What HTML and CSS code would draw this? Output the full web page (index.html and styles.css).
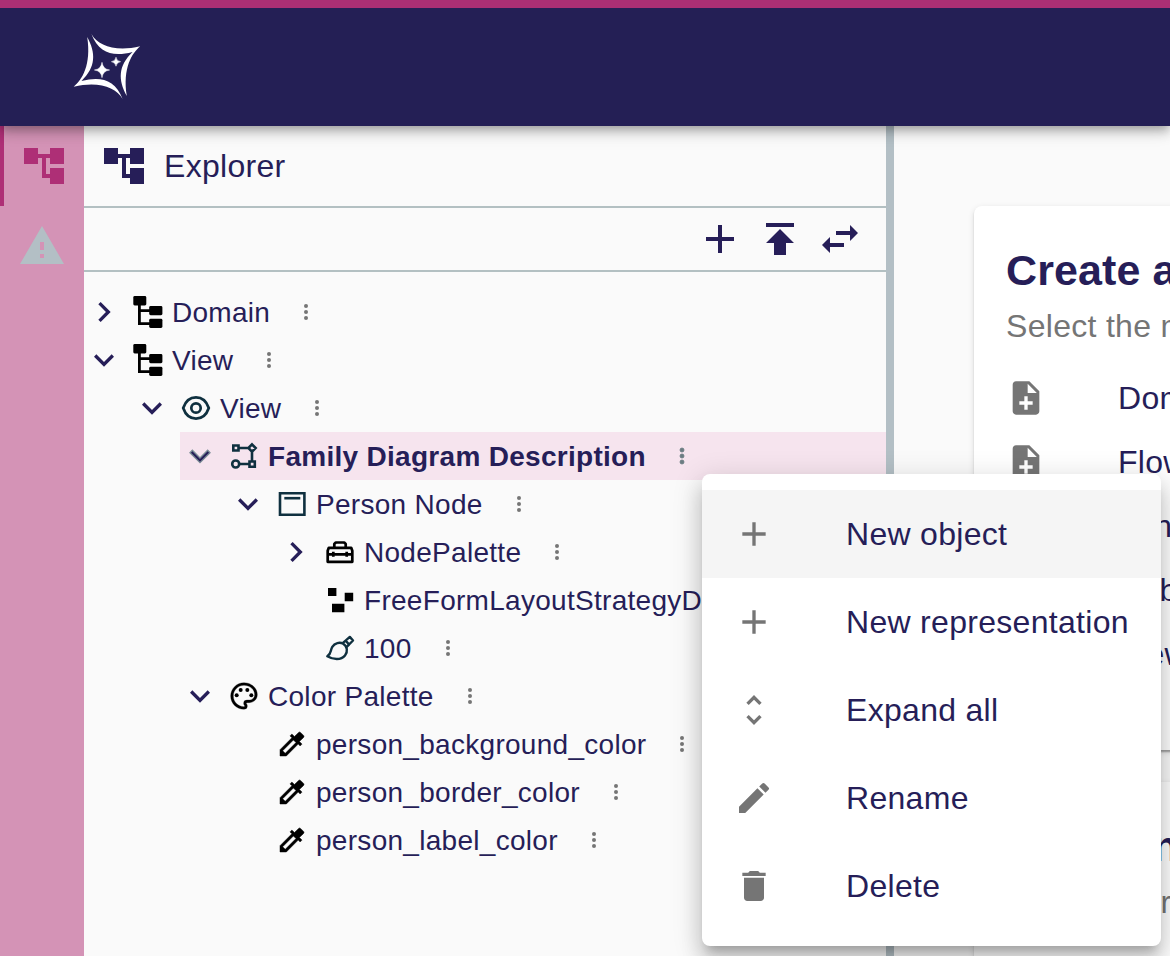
FILE: index.html
```
<!DOCTYPE html>
<html lang="en">
<head>
<meta charset="utf-8">
<title>Explorer</title>
<link rel="stylesheet" href="styles.css">
</head>
<body>
<svg class="defs" aria-hidden="true">
  <symbol id="tree" viewBox="0 0 24 24"><path d="M22 11V3h-7v3H9V3H2v8h7V8h2v10h4v3h7v-8h-7v3h-2V8h2v3z"/></symbol>
  <symbol id="warning" viewBox="0 0 24 24"><path d="M1 21h22L12 2 1 21zm12-3h-2v-2h2v2zm0-4h-2v-4h2v4z"/></symbol>
  <symbol id="add" viewBox="0 0 24 24"><path d="M19 13h-6v6h-2v-6H5v-2h6V5h2v6h6v2z"/></symbol>
  <symbol id="publish" viewBox="0 0 24 24"><path d="M5 4v2h14V4H5zm0 10h4v6h6v-6h4l-7-7-7 7z"/></symbol>
  <symbol id="swap" viewBox="0 0 24 24"><path d="M6.99 11 3 15l3.99 4v-3H14v-2H6.99v-3zM21 9l-3.99-4v3H10v2h7.01v3L21 9z"/></symbol>
  <symbol id="down" viewBox="0 0 24 24"><path d="M16.59 8.59 12 13.17 7.41 8.59 6 10l6 6 6-6z"/></symbol>
  <symbol id="right" viewBox="0 0 24 24"><path d="M10 6 8.59 7.41 13.17 12l-4.58 4.59L10 18l6-6z"/></symbol>
  <symbol id="more" viewBox="0 0 24 24"><circle cx="12" cy="6" r="2"/><circle cx="12" cy="12" r="2"/><circle cx="12" cy="18" r="2"/></symbol>
  <symbol id="unfold" viewBox="0 0 24 24"><path d="M12 5.83 15.17 9l1.41-1.41L12 3 7.41 7.59 8.83 9 12 5.83zm0 12.34L8.83 15l-1.41 1.41L12 21l4.59-4.59L15.17 15 12 18.17z"/></symbol>
  <symbol id="edit" viewBox="0 0 24 24"><path d="M3 17.25V21h3.75L17.81 9.94l-3.75-3.75L3 17.25zM20.71 7.04a.996.996 0 0 0 0-1.41l-2.34-2.34a.996.996 0 0 0-1.41 0l-1.83 1.83 3.75 3.75 1.83-1.83z"/></symbol>
  <symbol id="delete" viewBox="0 0 24 24"><path d="M6 19c0 1.1.9 2 2 2h8c1.1 0 2-.9 2-2V7H6v12zM19 4h-3.5l-1-1h-5l-1 1H5v2h14V4z"/></symbol>
  <symbol id="note" viewBox="0 0 24 24"><path d="M14 2H6c-1.1 0-1.99.9-1.99 2L4 20c0 1.1.89 2 1.99 2H18c1.1 0 2-.9 2-2V8l-6-6zm2 14h-3v3h-2v-3H8v-2h3v-3h2v3h3v2zm-3-7V3.5L18.5 9H13z"/></symbol>
  <symbol id="domain" viewBox="0 0 32 32"><rect x="1.3" y="0" width="13" height="9.4" rx="1.4"/><rect x="17.2" y="10" width="13.2" height="9.2" rx="1.4"/><rect x="17.2" y="22.8" width="13.2" height="9.2" rx="1.4"/><path d="M6 9h2.800v4.200H18v2.800H8.800v10.200H18V29H6z"/></symbol>
  <symbol id="eye" viewBox="0 0 32 32"><g fill="none" stroke="#0f303f" stroke-width="2.700"><path d="M3.200 16C5.500 9.200 10 5.400 16 5.400S26.500 9.200 28.800 16C26.500 22.800 22 26.600 16 26.600S5.500 22.800 3.200 16z"/><circle cx="16" cy="16" r="4.700"/></g></symbol>
  <symbol id="diagram" viewBox="0 0 32 32"><g fill="none" stroke="#0f303f" stroke-width="2.600"><path d="M5.300 5.500h5.200v5H5.300zM24 4.400 27.600 8 24 11.600 20.400 8zM21.500 21.500h5.300v5.200h-5.300zM11 8h9M24 12v9M11.500 24H21"/><circle cx="7.700" cy="24" r="3.500"/></g></symbol>
  <symbol id="node" viewBox="0 0 32 32"><g fill="none" stroke="#0f303f" stroke-width="2.600"><path d="M4 5.300h24.400v21.400H4z"/><path d="M8.300 10.200h16"/></g></symbol>
  <symbol id="toolbox" viewBox="0 0 32 32"><g fill="none" stroke="#000" stroke-width="2.700" stroke-linejoin="round"><path d="M4.800 11.800h22.400l1.100 3v11H3.700v-11zM10.300 11.500V8l1.500-1.500h8.400L21.700 8v3.500M4 18.400h24M9.300 15.800v5M22.700 15.800v5"/></g></symbol>
  <symbol id="freeform" viewBox="0 0 32 32"><path d="M4 4h8.400v8H4zM20.700 8.700h8.500v8.600h-8.500zM8 19.700h12.400v8.600H8z"/></symbol>
  <symbol id="brush" viewBox="0 0 32 32"><g fill="none" stroke="#0f303f" stroke-width="2.400" stroke-linejoin="round"><path d="M3.300 24.300C7.800 21.500 6 18.500 8.300 14.800c2.400-4 7.500-5 10.900-3.100 4.200 2.500 4.800 8 1.800 11.800-4 5-12 4.200-17.700.8z"/><path d="m18.600 11.200 3-2.600 4.200-3.700 3.200 3.600-3.900 4-3 2.800M21.600 8.600l3.500 3.900"/></g></symbol>
  <symbol id="palette" viewBox="0 0 24 24"><path stroke="#000" stroke-width=".2" d="M12 22C6.490 22 2 17.510 2 12S6.490 2 12 2s10 4.040 10 9c0 3.310-2.690 6-6 6h-1.770c-.28 0-.5.22-.5.5 0 .12.05.23.13.33.41.47.64 1.060.64 1.670A2.500 2.500 0 0 1 12 22zm0-18c-4.410 0-8 3.590-8 8s3.590 8 8 8c.28 0 .5-.22.5-.5a.54.54 0 0 0-.14-.35c-.41-.46-.63-1.050-.63-1.650a2.500 2.500 0 0 1 2.500-2.500H16c2.210 0 4-1.790 4-4 0-3.860-3.590-7-8-7z"/><circle cx="6.500" cy="11.500" r="1.500"/><circle cx="9.500" cy="7.500" r="1.500"/><circle cx="14.500" cy="7.500" r="1.500"/><circle cx="17.500" cy="11.500" r="1.500"/></symbol>
  <symbol id="picker" viewBox="0 0 24 24"><path stroke="#000" stroke-width=".35" d="m20.710 5.630-2.340-2.340a.996.996 0 0 0-1.410 0l-3.120 3.120-1.930-1.910-1.410 1.410 1.420 1.420L3 16.250V21h4.750l8.920-8.920 1.420 1.420 1.410-1.410-1.920-1.920 3.120-3.120c.4-.4.4-1.030.01-1.420zM6.920 19 5 17.080l8.060-8.060 1.920 1.920L6.920 19z"/></symbol>
</svg>

<div class="app">
  <header class="navbar">
    <svg class="logo" viewBox="72 32 70 70">
      <path id="swoosh" d="M91.400 34C98 46 116 52 140.300 46.300 132 53 122.500 68 126.800 96 118 80 118 66 132.500 52 114 57 99 54 91.400 34z"/>
      <use href="#swoosh" transform="rotate(180 107 66.500)"/>
      <path d="M102 62.300q.9 6.800 7.600 7.700-6.700.9-7.600 7.700-.9-6.800-7.600-7.700 6.700-.9 7.600-7.700zM116 57.200q.6 4 4.600 4.500-4 .6-4.600 4.500-.6-3.900-4.600-4.500 4-.5 4.600-4.500z" stroke="#fff" stroke-width=".5"/>
    </svg>
  </header>

  <div class="workbench">
    <nav class="rail">
      <div class="rail-item rail-active"><svg class="i48"><use href="#tree"/></svg></div>
      <div class="rail-item"><svg class="i48"><use href="#warning"/></svg></div>
    </nav>

    <section class="explorer">
      <div class="panel-title"><svg class="i48"><use href="#tree"/></svg><span>Explorer</span></div>
      <div class="toolbar">
        <svg class="i48"><use href="#add"/></svg>
        <svg class="i48"><use href="#publish"/></svg>
        <svg class="i48"><use href="#swap"/></svg>
      </div>
      <ul class="tree">
        <li><div class="row"><svg class="arrow"><use href="#right"/></svg><svg class="kind"><use href="#domain"/></svg><span>Domain</span><svg class="more"><use href="#more"/></svg></div></li>
        <li><div class="row"><svg class="arrow"><use href="#down"/></svg><svg class="kind"><use href="#domain"/></svg><span>View</span><svg class="more"><use href="#more"/></svg></div>
          <ul>
            <li><div class="row"><svg class="arrow"><use href="#down"/></svg><svg class="kind"><use href="#eye"/></svg><span>View</span><svg class="more"><use href="#more"/></svg></div>
              <ul>
                <li><div class="row selected"><svg class="arrow"><use href="#down"/></svg><svg class="kind"><use href="#diagram"/></svg><span>Family Diagram Description</span><svg class="more"><use href="#more"/></svg></div>
                  <ul>
                    <li><div class="row"><svg class="arrow"><use href="#down"/></svg><svg class="kind"><use href="#node"/></svg><span>Person Node</span><svg class="more"><use href="#more"/></svg></div>
                      <ul>
                        <li><div class="row"><svg class="arrow"><use href="#right"/></svg><svg class="kind"><use href="#toolbox"/></svg><span>NodePalette</span><svg class="more"><use href="#more"/></svg></div></li>
                        <li><div class="row"><i class="arrow"></i><svg class="kind"><use href="#freeform"/></svg><span>FreeFormLayoutStrategyDescription</span></div></li>
                        <li><div class="row"><i class="arrow"></i><svg class="kind"><use href="#brush"/></svg><span>100</span><svg class="more"><use href="#more"/></svg></div></li>
                      </ul>
                    </li>
                  </ul>
                </li>
                <li><div class="row"><svg class="arrow"><use href="#down"/></svg><svg class="kind"><use href="#palette"/></svg><span>Color Palette</span><svg class="more"><use href="#more"/></svg></div>
                  <ul>
                    <li><div class="row"><i class="arrow"></i><svg class="kind"><use href="#picker"/></svg><span>person_background_color</span><svg class="more"><use href="#more"/></svg></div></li>
                    <li><div class="row"><i class="arrow"></i><svg class="kind"><use href="#picker"/></svg><span>person_border_color</span><svg class="more"><use href="#more"/></svg></div></li>
                    <li><div class="row"><i class="arrow"></i><svg class="kind"><use href="#picker"/></svg><span>person_label_color</span><svg class="more"><use href="#more"/></svg></div></li>
                  </ul>
                </li>
              </ul>
            </li>
          </ul>
        </li>
      </ul>
    </section>

    <main class="main">
      <section class="card">
        <h2>Create a new model</h2>
        <p>Select the model to create</p>
        <div class="model"><svg class="i40"><use href="#note"/></svg><span>Domain</span></div>
        <div class="model"><svg class="i40"><use href="#note"/></svg><span>Flow</span></div>
        <div class="model"><svg class="i40"><use href="#note"/></svg><span>Lan</span></div>
        <div class="model"><svg class="i40"><use href="#note"/></svg><span>Robot</span></div>
        <div class="model"><svg class="i40"><use href="#note"/></svg><span>View</span></div>
      </section>
      <section class="card">
        <h2>Open an existing</h2>
        <p>Select the representation</p>
      </section>
    </main>
  </div>

  <div class="menu">
    <div class="menu-item hover"><svg class="i40"><use href="#add"/></svg><span>New object</span></div>
    <div class="menu-item"><svg class="i40"><use href="#add"/></svg><span>New representation</span></div>
    <div class="menu-item"><svg class="i40"><use href="#unfold"/></svg><span>Expand all</span></div>
    <div class="menu-item"><svg class="i40"><use href="#edit"/></svg><span>Rename</span></div>
    <div class="menu-item"><svg class="i40"><use href="#delete"/></svg><span>Delete</span></div>
  </div>
</div>
</body>
</html>
```
FILE: styles.css
```
* { box-sizing: border-box; }
body {
  margin: 0;
  font-family: "Liberation Sans", Arial, sans-serif;
  color: #261e58;
  background: #fafafa;
  overflow: hidden;
}
.defs { display: none; }
svg { fill: currentColor; flex: none; }
ul { list-style: none; margin: 0; padding: 0; }
.i48 { width: 48px; height: 48px; }
.i40 { width: 40px; height: 40px; }

.app {
  position: relative;
  display: flex;
  flex-direction: column;
  width: 1170px;
  height: 956px;
  overflow: hidden;
}
.navbar {
  z-index: 1;
  display: flex;
  align-items: center;
  flex: none;
  height: 126px;
  padding-left: 72px;
  border-top: 8px solid #ab2f74;
  background: #241f55;
  color: #fff;
  box-shadow: 0 4px 8px -2px rgba(0,0,0,.2), 0 8px 10px rgba(0,0,0,.14), 0 2px 20px rgba(0,0,0,.12);
}
.logo { width: 70px; height: 70px; }

.workbench { display: flex; flex: 1; min-height: 0; }
.rail { flex: none; width: 84px; background: #d493b6; }
.rail-item {
  display: flex;
  align-items: center;
  justify-content: center;
  height: 80px;
  color: #b3bfc5;
}
.rail-active { border-left: 4px solid #ae2f76; color: #ae2f76; }

.explorer {
  flex: none;
  width: 810px;
  border-right: 8px solid #b3bfc5;
  overflow: hidden;
}
.panel-title {
  display: flex;
  align-items: center;
  gap: 16px;
  height: 82px;
  padding-left: 16px;
  border-bottom: 2px solid #b3c0c2;
  font-size: 32px;
  letter-spacing: .3px;
}
.toolbar {
  display: flex;
  align-items: center;
  justify-content: flex-end;
  gap: 12px;
  height: 64px;
  padding-right: 22px;
  border-bottom: 2px solid #b3c0c2;
}
.tree { padding-top: 16px; font-size: 28px; letter-spacing: .29px; }
.tree ul { padding-left: 48px; }
.row { display: flex; align-items: center; height: 48px; white-space: nowrap; }
.row span { padding-top: 2px; }
.arrow { flex: none; width: 40px; height: 40px; margin-right: 8px; }
.kind { width: 32px; height: 32px; margin-right: 8px; color: #000; }
.more { width: 24px; height: 24px; margin-left: 24px; color: #757575; }
.selected { background: #f6e4ee; font-weight: bold; }
.selected .arrow { stroke: #7c8d97; stroke-width: .8px; }
.selected .more { color: #6b7c82; stroke: #6b7c82; stroke-width: .8px; }

.main {
  display: flex;
  flex-direction: column;
  gap: 32px;
  flex: 1;
  min-width: 0;
  padding: 80px 0 0 80px;
}
.card {
  flex: none;
  width: 600px;
  height: 544px;
  padding: 32px;
  border-radius: 8px;
  background: #fff;
  box-shadow: 0 4px 2px -2px rgba(0,0,0,.2), 0 2px 2px rgba(0,0,0,.14), 0 2px 6px rgba(0,0,0,.12);
}
.card h2 { margin: 0; font-size: 43px; line-height: 64px; letter-spacing: .1px; }
.card p { margin: 0 0 16px; font-size: 32px; line-height: 48px; letter-spacing: .3px; color: #757575; }
.model {
  display: flex;
  align-items: center;
  gap: 72px;
  height: 64px;
  font-size: 32px;
  letter-spacing: .3px;
}
.model svg { color: #757575; }

.menu {
  position: absolute;
  z-index: 2;
  left: 702px;
  top: 474px;
  width: 459px;
  padding: 16px 0;
  border-radius: 8px;
  background: #fff;
  box-shadow: 0 10px 10px -6px rgba(0,0,0,.2), 0 16px 20px 2px rgba(0,0,0,.14), 0 6px 28px 4px rgba(0,0,0,.12);
}
.menu-item {
  display: flex;
  align-items: center;
  gap: 72px;
  height: 88px;
  padding-left: 32px;
  font-size: 32px;
  letter-spacing: .3px;
  white-space: nowrap;
}
.menu-item svg { color: #757575; }
.hover { background: #f5f5f5; }
```
